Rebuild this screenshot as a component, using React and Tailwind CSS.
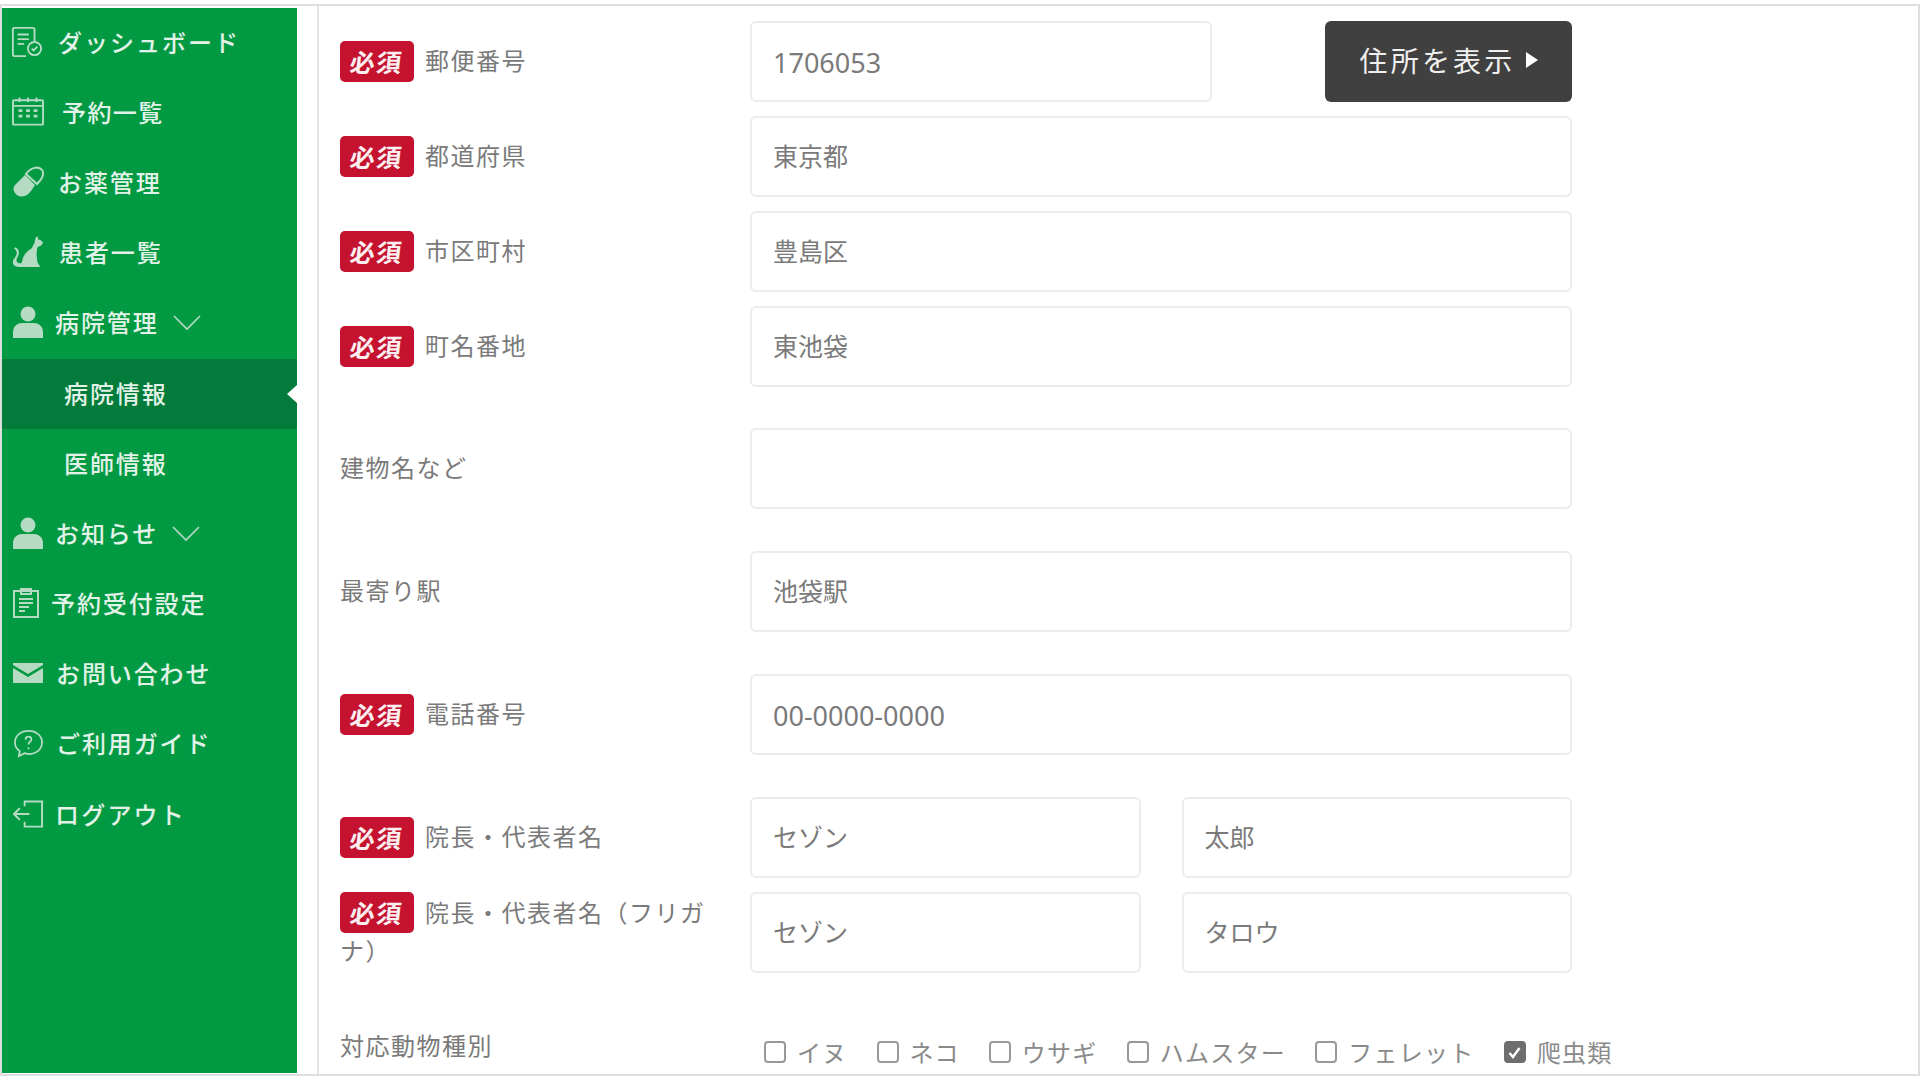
import React from "react";

const font = "font-['Noto_Sans_CJK_JP','Noto_Sans',sans-serif]";

const IconDash = () => (
  <svg width="34" height="34" viewBox="0 0 34 34" fill="none" stroke="#b5dcc3" strokeWidth="2">
    <path d="M2 2h21a2 2 0 0 1 2 2v12M16 32H4a2 2 0 0 1-2-2V2" />
    <path d="M7 9h12M7 14h12M7 19h7" />
    <circle cx="25" cy="24" r="7" />
    <path d="M22 24l2 2 4-4" />
  </svg>
);
const IconCal = () => (
  <svg width="36" height="31" viewBox="0 0 34 30" fill="none" stroke="#b5dcc3" strokeWidth="2">
    <rect x="1" y="3" width="32" height="26" rx="1" />
    <path d="M1 9h32M8 0v5M17 0v5M26 0v5" />
    <path d="M7 14h4M15 14h4M23 14h4M7 20h4M15 20h4M23 20h4" strokeWidth="3" />
  </svg>
);
const IconPill = () => (
  <svg width="32" height="32" viewBox="0 0 32 32" fill="none">
    <path d="M3 19 L13 9 L23 19 L19 25 C14 32 6 32 3 27 C1 24 1 22 3 19Z" fill="#b5dcc3" />
    <path d="M14 8 C19 1 27 0 30 4 C33 8 30 13 25 18Z" stroke="#b5dcc3" strokeWidth="2" />
  </svg>
);
const IconCat = () => (
  <svg width="34" height="34" viewBox="0 0 34 34" fill="#b5dcc3">
    <path d="M27 0l1 4h2l3 3-2 3-4 2-1 7 1 9 3 5H12c-4 0-8 0-10-2-2-3-1-6 1-8 2-3 3-5 1-8L2 13l2-1c3 2 4 5 3 8-1 3-3 5-2 7 1 2 3 2 5 2l1-3c1-6 5-10 10-13l3-6 1-5z" />
  </svg>
);
const IconUser = () => (
  <svg width="30" height="32" viewBox="0 0 30 32" fill="#b5dcc3">
    <circle cx="15" cy="8" r="7.5" />
    <path d="M0 32v-6c0-6 5-9 9-9h12c4 0 9 3 9 9v6z" />
  </svg>
);
const IconClip = () => (
  <svg className="-ml-[4px]" width="26" height="30" viewBox="0 0 26 30" fill="none" stroke="#b5dcc3" strokeWidth="2">
    <rect x="1" y="3" width="24" height="26" />
    <path d="M8 6V1h10v5z" />
    <path d="M6 11h14M6 15h14M6 19h10M6 23h6" />
  </svg>
);
const IconMail = () => (
  <svg width="30" height="20" viewBox="0 0 30 20" fill="#b5dcc3">
    <path d="M0 2V0h30v2L15 11z" />
    <path d="M0 5l15 9 15-9v15H0z" />
  </svg>
);
const IconHelp = () => (
  <svg width="31" height="29" viewBox="0 0 32 30" fill="none" stroke="#b5dcc3" strokeWidth="1.8">
    <path d="M16 2C8 2 2 7 2 14c0 4 2 7 5 9l-1 5 6-3c1 0 3 1 4 1 8 0 14-5 14-12S24 2 16 2z" />
    <path d="M13 11c0-2 1-3 3-3s3 1 3 3-3 2-3 5M16 19v2" />
  </svg>
);
const IconLogout = () => (
  <svg width="31" height="28" viewBox="0 0 32 28" fill="none" stroke="#b5dcc3" strokeWidth="2">
    <path d="M12 6V1h18v26H12v-5" />
    <path d="M1 14h16M7 8l-6 6 6 6" />
  </svg>
);
const Chevron = () => (
  <svg className="ml-[14px] mt-[2px]" width="28" height="16" viewBox="0 0 28 16" fill="none" stroke="#b5dcc3" strokeWidth="1.6">
    <path d="M1 1l13 13L27 1" />
  </svg>
);

const NavItem = ({ icon, label, gap = "", pl = "pl-[10px]", tracking = "tracking-[1.9px]", chevron, active }) => (
  <div className={`relative flex h-[70.2px] items-center pb-[3px] ${pl} ${active ? "bg-[#037c3b]" : ""}`}>
    {icon && <span className="flex w-[32px] shrink-0 items-center justify-center">{icon}</span>}
    <span className={`text-[24px] font-medium leading-none text-[#e2f2e8] ${tracking} ${gap}`}>{label}</span>
    {chevron && <Chevron />}
    {active && (
      <span className="absolute right-0 top-1/2 -translate-y-1/2 border-y-[9px] border-r-[10px] border-y-transparent border-r-white" />
    )}
  </div>
);

const Badge = ({ inline }) => (
  <span className={`mr-[11px] inline-flex h-[41px] w-[74px] shrink-0 items-center justify-center rounded-[5px] bg-[#c4122f] text-[25px] font-bold leading-none text-[#fbeef0] ${inline ? "-my-[4px] align-middle" : ""}`}>
    <span className="inline-block -skew-x-6">必須</span>
  </span>
);

const Input = ({ value = "", className = "flex-1", text = "pb-[3px] text-[25px] font-['Noto_Sans_CJK_JP',sans-serif]" }) => (
  <input
    readOnly
    value={value}
    className={`h-[81px] min-w-0 rounded-[6px] border-2 border-[#ececec] bg-white px-[21px] leading-none text-[#7a7a7a] outline-none ${text} ${className}`}
  />
);

const Row = ({ required, label, mt = "", children }) => (
  <div className={`flex w-[1232px] items-center ${mt}`}>
    <div className="flex w-[410px] shrink-0 items-center text-[24px] leading-none tracking-[1.5px] text-[#7a7a7a]">
      {required && <Badge />}
      <span className="pb-[3px]">{label}</span>
    </div>
    <div className="flex min-w-0 flex-1 items-center gap-[41px]">{children}</div>
  </div>
);

const Check = ({ label, checked, mr = "" }) => (
  <label className={`flex items-center gap-[11px] text-[24px] leading-none tracking-[1.3px] text-[#8a8a8a] ${mr}`}>
    {checked ? (
      <span className="flex h-[22px] w-[22px] items-center justify-center rounded-[4px] border-2 border-[#6e6e6e] bg-[#6e6e6e]">
        <svg width="15" height="15" viewBox="0 0 15 15" fill="none" stroke="#ffffff" strokeWidth="2.4">
          <path d="M2.5 8l3.5 4 6.5-9" />
        </svg>
      </span>
    ) : (
      <span className="h-[22px] w-[22px] rounded-[4px] border-2 border-[#999999] bg-white" />
    )}
    {label}
  </label>
);

export default function App() {
  return (
    <div className={`h-[1080px] w-[1920px] overflow-hidden bg-white pt-[4px] ${font}`}>
      <div className="flex h-[1072px] border-2 border-[#dedede]">
        <nav className="mb-[1px] mt-[2px] w-[295px] shrink-0 overflow-hidden bg-[#019a43]">
          <NavItem icon={<IconDash />} label="ダッシュボード" gap="ml-[15px]" pl="pl-[9px]" tracking="tracking-[2px]" />
          <NavItem icon={<IconCal />} label="予約一覧" gap="ml-[18px]" tracking="tracking-[1.4px]" />
          <NavItem icon={<IconPill />} label="お薬管理" gap="ml-[14px]" />
          <NavItem icon={<IconCat />} label="患者一覧" gap="ml-[15px]" />
          <NavItem icon={<IconUser />} label="病院管理" gap="ml-[11px]" chevron />
          <NavItem label="病院情報" pl="pl-[62px]" active />
          <NavItem label="医師情報" pl="pl-[62px]" />
          <NavItem icon={<IconUser />} label="お知らせ" gap="ml-[11px]" chevron />
          <NavItem icon={<IconClip />} label="予約受付設定" gap="ml-[7px]" />
          <NavItem icon={<IconMail />} label="お問い合わせ" gap="ml-[12px]" />
          <NavItem icon={<IconHelp />} label="ご利用ガイド" gap="ml-[12px]" />
          <NavItem icon={<IconLogout />} label="ログアウト" gap="ml-[11px]" tracking="tracking-[2.2px]" />
        </nav>
        <div className="w-[20px] shrink-0" />
        <main className="flex-1 overflow-hidden border-l-2 border-[#e4e4e4] pl-[21px] pt-[15px]">
          <Row required label="郵便番号">
            <Input value="1706053" className="w-[462px]" text="pt-[1px] text-[27px] font-['Noto_Sans',sans-serif]" />
            <button className="ml-[72px] flex h-[81px] w-[247px] items-center justify-center gap-[10px] rounded-[6px] bg-[#404040] pb-[3px] text-[28px] leading-none tracking-[3.2px] text-[#f0f0f0]">
              住所を表示
              <span className="border-y-[8px] border-l-[12px] border-y-transparent border-l-white" />
            </button>
          </Row>
          <Row required label="都道府県" mt="mt-[14px]"><Input value="東京都" /></Row>
          <Row required label="市区町村" mt="mt-[14px]"><Input value="豊島区" /></Row>
          <Row required label="町名番地" mt="mt-[14px]"><Input value="東池袋" /></Row>
          <Row label="建物名など" mt="mt-[41px]"><Input /></Row>
          <Row label="最寄り駅" mt="mt-[42px]"><Input value="池袋駅" /></Row>
          <Row required label="電話番号" mt="mt-[42px]"><Input value="00-0000-0000" text="pt-[1px] text-[27px] font-['Noto_Sans',sans-serif]" /></Row>
          <Row required label="院長・代表者名" mt="mt-[42px]">
            <Input value="セゾン" />
            <Input value="太郎" />
          </Row>
          <div className="mt-[14px] flex w-[1232px] items-center">
            <div className="w-[410px] shrink-0 pb-[6px] pr-[20px] text-[24px] leading-[34px] tracking-[1.5px] text-[#7a7a7a]">
              <Badge inline />
              <span className="align-middle">院長・代表者名（フリガナ）</span>
            </div>
            <div className="flex min-w-0 flex-1 gap-[41px]">
              <Input value="セゾン" />
              <Input value="タロウ" />
            </div>
          </div>
          <div className="mt-[53px] flex items-center">
            <div className="w-[410px] shrink-0 text-[24px] leading-none tracking-[1.5px] text-[#7a7a7a]">対応動物種別</div>
            <div className="ml-[14px] mt-[14px] flex items-center">
              <Check label="イヌ" mr="mr-[29px]" />
              <Check label="ネコ" mr="mr-[29px]" />
              <Check label="ウサギ" mr="mr-[29px]" />
              <Check label="ハムスター" mr="mr-[29px]" />
              <Check label="フェレット" mr="mr-[29px]" />
              <Check label="爬虫類" checked />
            </div>
          </div>
        </main>
      </div>
    </div>
  );
}
